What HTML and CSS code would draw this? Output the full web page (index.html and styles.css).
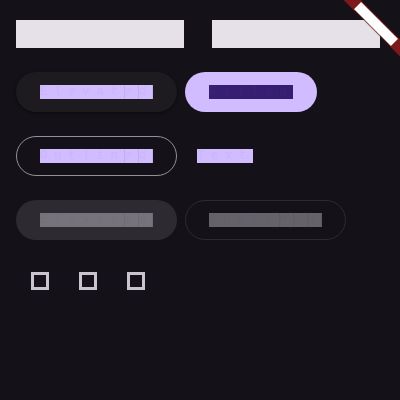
FILE: index.html
```html
<!DOCTYPE html>
<html lang="en">
<head>
<meta charset="utf-8">
<title>Buttons</title>
<link rel="stylesheet" href="styles.css">
</head>
<body>
<main class="page">
  <div class="row top">
    <div class="bar"></div>
    <div class="bar"></div>
  </div>
  <div class="row">
    <button class="btn elevated"><span class="lbl">Elevated</span></button>
    <button class="btn filled"><span class="lbl">Filled</span></button>
  </div>
  <div class="row">
    <button class="btn outlined"><span class="lbl">Outlined</span></button>
    <button class="btn text"><span class="lbl">Text</span></button>
  </div>
  <div class="row">
    <button class="btn disabled" disabled><span class="lbl">Elevated</span></button>
    <button class="btn outlined disabled-outline" disabled><span class="lbl">Outlined</span></button>
  </div>
  <div class="row icons">
    <button class="icon-btn" aria-label="icon"><span class="ico"></span></button>
    <button class="icon-btn" aria-label="icon"><span class="ico"></span></button>
    <button class="icon-btn" aria-label="icon"><span class="ico"></span></button>
  </div>
</main>
<div class="banner"><span class="dbg">DEBUG</span></div>
</body>
</html>
```
FILE: styles.css
```css
html, body {
  margin: 0;
  padding: 0;
  background: #141218;
  width: 400px;
  height: 400px;
  overflow: hidden;
}
.page {
  display: flex;
  flex-direction: column;
  gap: 24px;
  padding: 20px 0 0 16px;
}
.row {
  display: flex;
  align-items: center;
  gap: 8px;
  height: 40px;
}
.row.top {
  height: 28px;
  gap: 28px;
}
.bar {
  width: 168px;
  height: 28px;
  background: #E6E0E9;
}
.btn {
  box-sizing: border-box;
  height: 40px;
  border-radius: 20px;
  border: none;
  padding: 0 24px;
  margin: 0;
  display: inline-flex;
  align-items: center;
  background: transparent;
  font: inherit;
}
.lbl {
  display: inline-block;
  height: 14px;
  line-height: 14px;
  font-family: "Liberation Mono", monospace;
  font-size: 12px;
  letter-spacing: 6.9px;
  white-space: nowrap;
  overflow: hidden;
  background-image: repeating-linear-gradient(90deg, transparent 0 13.7px, rgba(0,0,0,0.07) 13.7px 14.1px);
}
.elevated {
  background: #1D1B20;
  box-shadow: 0 1px 2px rgba(0,0,0,0.3), 0 1px 3px 1px rgba(0,0,0,0.15);
}
.elevated .lbl, .outlined .lbl, .text .lbl {
  background-color: #D0BCFF;
  color: #CBB6FA;
}
.filled {
  background: #D0BCFF;
}
.filled .lbl {
  background-color: #381E72;
  color: #3B2276;
}
.outlined {
  border: 1px solid #938F99;
  padding: 0 23px;
}
.text {
  padding: 0 12px;
}
.btn.disabled {
  background: #2D2B31;
}
.btn.disabled .lbl {
  background-color: #77737B;
  color: #74707A;
}
.btn.disabled-outline {
  border-color: #2D2B31;
  background: transparent;
}
.btn.disabled-outline .lbl {
  background-color: #66626A;
  color: #636067;
}
.row.icons {
  gap: 0;
  height: 48px;
  margin-top: -7px;
}
.icon-btn {
  width: 48px;
  height: 48px;
  border: none;
  background: transparent;
  padding: 0;
  margin: 0;
  display: flex;
  align-items: center;
  justify-content: center;
}
.ico {
  box-sizing: border-box;
  width: 18px;
  height: 18px;
  border: 3px solid #CAC4D0;
}
.banner {
  position: fixed;
  left: 336px;
  top: 18px;
  width: 80px;
  height: 12px;
  transform: rotate(45deg);
  background: rgba(183,28,28,0.63);
  display: flex;
  align-items: center;
  justify-content: center;
}
.dbg {
  display: inline-block;
  height: 10px;
  line-height: 10px;
  font-family: "Liberation Mono", monospace;
  font-size: 9px;
  letter-spacing: 4.8px;
  background: #FFFFFF;
  color: #F6F6F6;
  overflow: hidden;
  box-shadow: -0.5px 0.5px 1px rgba(0,0,0,0.3);
}
```
